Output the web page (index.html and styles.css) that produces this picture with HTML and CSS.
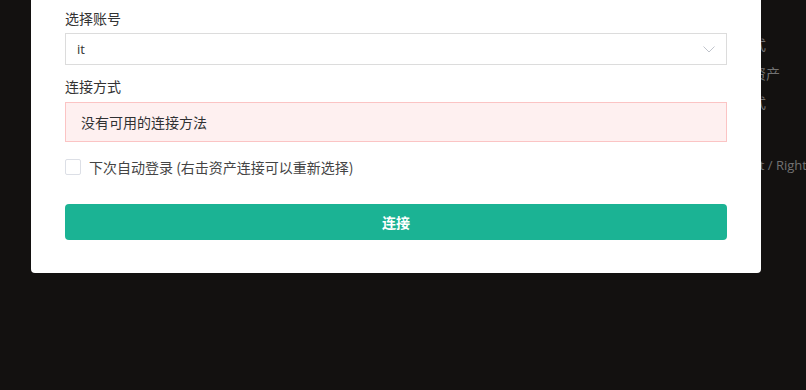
FILE: index.html
```html
<!DOCTYPE html>
<html lang="zh-CN">
<head>
  <meta charset="UTF-8" />
  <meta name="viewport" content="width=device-width, initial-scale=1.0"/>
  <title>连接资产</title>
  <link rel="stylesheet" href="styles.css">
</head>
<body>
<div class="backdrop">
  <div class="help">
    <div class="help-line">连接方式</div>
    <div class="help-line">打开新资产</div>
    <div class="help-line">连接方式</div>
    <div class="help-line gap">Alt + Left / Right</div>
  </div>
</div>
<div class="modal">
  <div class="label">选择账号</div>
  <div class="select">
    <span>it</span>
    <svg class="arrow" width="12" height="7" viewBox="0 0 12 7"><path d="M0.5 0.5 L6 6 L11.5 0.5" fill="none" stroke="#c0c4cc" stroke-width="1"/></svg>
  </div>
  <div class="label second">连接方式</div>
  <div class="alert">没有可用的连接方法</div>
  <label class="check">
    <span class="box"></span>
    <span>下次自动登录 (右击资产连接可以重新选择)</span>
  </label>
  <button class="btn">连接</button>
</div>
</body>
</html>
```

FILE: styles.css
```css
* { margin: 0; padding: 0; box-sizing: border-box; }
body {
  background: #131110;
  width: 806px;
  height: 390px;
  overflow: hidden;
  position: relative;
  font-family: "Noto Sans CJK SC", "Noto Sans", sans-serif;
  font-size: 14px;
  color: #333;
}
.backdrop { height: 100%; }
.help {
  padding: 34px 0 0 710px;
  color: #727272;
  font-size: 14px;
  white-space: nowrap;
}
.help-line { height: 29px; line-height: 20px; }
.help-line.gap { margin-top: 34px; padding-left: 1px; font-family: "Open Sans", sans-serif; font-size: 13px; }
.modal {
  position: absolute;
  left: 31px;
  top: -30px;
  width: 730px;
  background: #fff;
  border-radius: 4px;
  padding: 38px 34px 33px;
}
.label { line-height: 20px; margin-bottom: 5px; color: #333; }
.label.second { margin-top: 11px; margin-bottom: 6px; }
.select {
  height: 32px;
  border: 1px solid #dcdcdc;
  display: flex;
  align-items: center;
  justify-content: space-between;
  padding: 0 11px;
  font-family: "Open Sans", sans-serif;
  font-size: 13px;
}
.alert {
  height: 40px;
  background: #fef0f0;
  border: 1px solid #fbc4c4;
  display: flex;
  align-items: center;
  padding: 0 15px;
  color: #303133;
}
.check {
  display: flex;
  align-items: center;
  margin-top: 17px;
  height: 16px;
  color: #444;
}
.box {
  width: 16px;
  height: 16px;
  border: 1px solid #dcdfe6;
  border-radius: 2px;
  margin-right: 8px;
}
.btn {
  display: block;
  width: 100%;
  height: 36px;
  margin-top: 29px;
  background: #1bb394;
  border: none;
  border-radius: 4px;
  color: #fff;
  font-family: inherit;
  font-size: 14px;
  font-weight: bold;
}
```
